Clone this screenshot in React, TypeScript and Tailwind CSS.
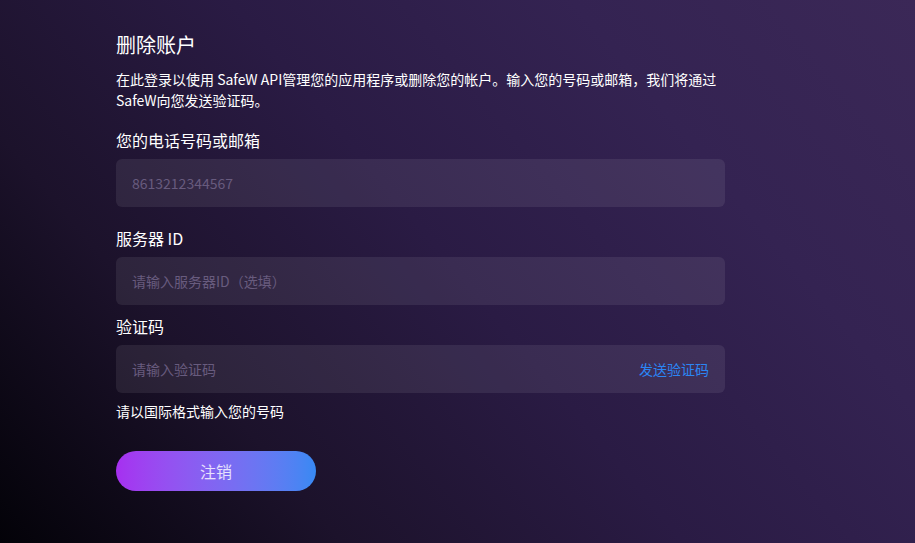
import React from 'react';

const font = { fontFamily: '"Noto Sans CJK SC", "Liberation Sans", sans-serif' };

function Field({
  label,
  placeholder,
  labelClass,
  action
}: {
  label: string;
  placeholder: string;
  labelClass: string;
  action?: string;
}) {
  return (
    <div>
      <label className={`block text-[16px] leading-[24px] text-white ${labelClass}`}>{label}</label>
      <div className="mt-[7px] flex h-[48px] items-center rounded-[6px] bg-white/[0.08] px-4">
        <input
          className="flex-1 bg-transparent text-[14px] text-white outline-none placeholder:text-[#685b7e]"
          placeholder={placeholder}
          style={font}
        />
        {action && <span className="text-[14px] text-[#2b86f5]">{action}</span>}
      </div>
    </div>
  );
}

export default function App() {
  return (
    <div
      className="min-h-screen w-full bg-[linear-gradient(50deg,#030208_0%,#1c122b_25%,#2a1b44_50%,#342352_75%,#3b2857_100%)]"
      style={font}
    >
      <div className="ml-[116px] w-[609px] pt-[31px]">
        <h1 className="text-[20px] leading-[28px] text-white">删除账户</h1>
        <p className="mt-[10px] text-[14px] leading-[21px] text-white">
          在此登录以使用 SafeW API管理您的应用程序或删除您的帐户。输入您的号码或邮箱，我们将通过SafeW向您发送验证码。
        </p>

        <Field label="您的电话号码或邮箱" placeholder="8613212344567" labelClass="mt-[17px]" />
        <Field label="服务器 ID" placeholder="请输入服务器ID（选填）" labelClass="mt-[19px]" />
        <Field label="验证码" placeholder="请输入验证码" labelClass="mt-[9px]" action="发送验证码" />

        <p className="mt-[8px] text-[14px] leading-[20px] text-white">请以国际格式输入您的号码</p>

        <button className="mt-[30px] h-[40px] w-[200px] rounded-full bg-linear-to-r from-[#a62ff0] to-[#3789f3] text-[16px] text-white/80">
          注销
        </button>
      </div>
    </div>
  );
}
